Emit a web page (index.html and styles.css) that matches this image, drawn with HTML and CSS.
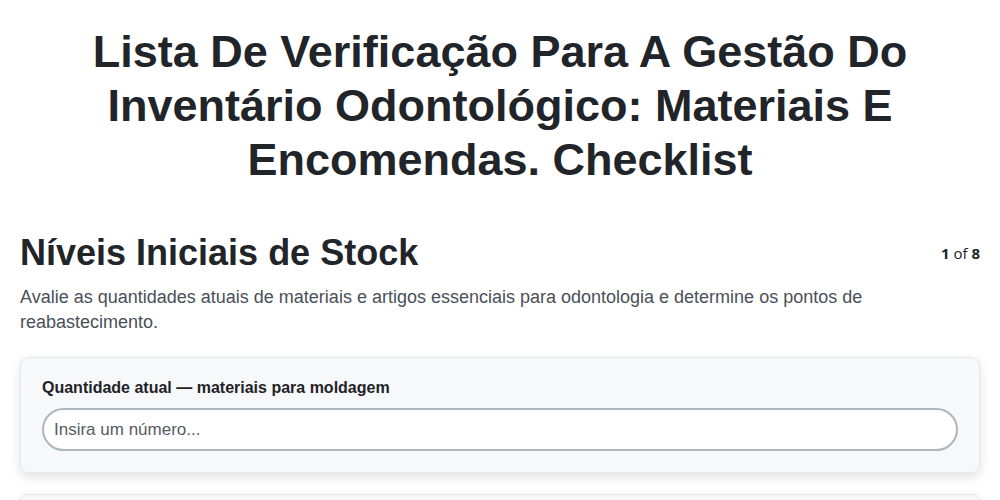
FILE: index.html
```html
<!DOCTYPE html>
<html lang="pt">
<head>
  <meta charset="UTF-8" />
  <meta name="viewport" content="width=device-width, initial-scale=1.0" />
  <title>Lista De Verificação Para A Gestão Do Inventário Odontológico</title>
  <link rel="stylesheet" href="styles.css">
</head>
<body>
  <div class="page">
    <h1 class="title">Lista De Verificação Para A Gestão Do Inventário Odontológico: Materiais E Encomendas. Checklist</h1>

    <!-- Step 1 -->
    <section class="step">
      <div class="step-head">
        <h2>Níveis Iniciais de Stock</h2>
        <span class="counter"><b>1</b> of <b>8</b></span>
      </div>
      <p class="step-desc">Avalie as quantidades atuais de materiais e artigos essenciais para odontologia e determine os pontos de reabastecimento.</p>

      <div class="card">
        <label class="field-label" for="q1">Quantidade atual — materiais para moldagem</label>
        <input id="q1" class="field-input" type="text" placeholder="Insira um número..." />
      </div>

      <div class="card">
        <label class="field-label" for="q2">Quantidade atual — luvas e máscaras</label>
        <input id="q2" class="field-input" type="text" placeholder="Insira um número..." />
      </div>
    </section>
  </div>
</body>
</html>
```

FILE: styles.css
```css
body {
  margin: 0;
  background-color: #ffffff;
  font-family: "Liberation Sans", Arial, sans-serif;
  color: #212529;
}

.page {
  padding: 0 20px;
}

.title {
  font-size: 45px;
  line-height: 54px;
  text-align: center;
  margin: 25px 60px 0;
  color: #212529;
}

.step {
  margin-top: 44px;
}

.step-head {
  display: flex;
  justify-content: space-between;
  align-items: center;
}

.step-head h2 {
  margin: 0;
  font-size: 36px;
  line-height: 44px;
  color: #212529;
}

.counter {
  font-family: "Open Sans", sans-serif;
  font-size: 15px;
  color: #212529;
}

.step-desc {
  max-width: 900px;
  margin: 10px 0 22px;
  font-size: 18px;
  line-height: 25px;
  color: #495057;
}

.card {
  background-color: #f7f8fa;
  border: 1px solid #e5e7eb;
  border-radius: 8px;
  box-shadow: 0 4px 12px rgba(0,0,0,0.12);
  padding: 20px 21px 21px;
  margin-bottom: 21px;
}

.field-label {
  display: block;
  font-weight: bold;
  font-size: 16px;
  line-height: 20px;
  margin-bottom: 10px;
  color: #1f2328;
}

.field-input {
  box-sizing: border-box;
  width: 100%;
  height: 43px;
  padding: 0 10px;
  border: 2px solid #adb5bd;
  border-radius: 22px;
  background-color: #ffffff;
  font-family: "Liberation Sans", Arial, sans-serif;
  font-size: 17px;
  color: #212529;
  outline: none;
}

.field-input::placeholder {
  color: #555b61;
}
```
